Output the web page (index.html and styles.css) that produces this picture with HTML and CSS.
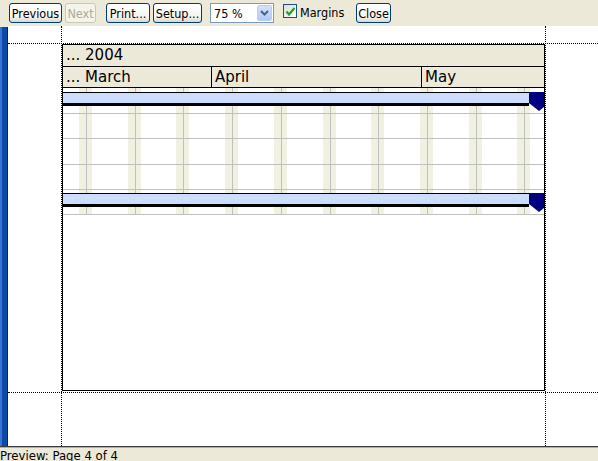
FILE: index.html
```html
<!DOCTYPE html>
<html>
<head>
<meta charset="utf-8">
<link rel="stylesheet" href="styles.css">
</head>
<body>
<div class="toolbar">
  <button class="btn w-prev">Previous</button>
  <button class="btn w-next" disabled>Next</button>
  <button class="btn w-print">Print...</button>
  <button class="btn w-setup">Setup...</button>
  <div class="combo">
    <span class="combo-text">75 %</span>
    <span class="combo-drop"><svg width="9" height="6" viewBox="0 0 9 6"><path d="M1 1 L4.5 4.5 L8 1" fill="none" stroke="#4D6185" stroke-width="2"/></svg></span>
  </div>
  <span class="check"><svg width="11" height="11" viewBox="0 0 11 11"><path d="M1.5 5.5 L4 8.5 L9.5 2" fill="none" stroke="#21A121" stroke-width="2.2"/></svg></span>
  <span class="check-label">Margins</span>
  <button class="btn w-close">Close</button>
</div>
<div class="main">
  <div class="strip"></div>
  <div class="canvas">
    <div class="chart">
      <div class="hdr-year">... 2004</div>
      <div class="hdr-months">
        <div class="month m-mar">... March</div>
        <div class="month m-apr">April</div>
        <div class="month m-may">May</div>
      </div>
      <div class="grid">
        <div class="row tall"><div class="bar first"><div class="bar-fill"></div><svg class="marker" width="20" height="19" viewBox="0 0 20 19"><polygon points="0,0 20,0 20,11 10,19 0,11" fill="#000080"/></svg></div></div>
        <div class="row"></div>
        <div class="row tall"></div>
        <div class="row"></div>
        <div class="row"><div class="bar"><div class="bar-fill"></div><svg class="marker" width="20" height="19" viewBox="0 0 20 19"><polygon points="0,0 20,0 20,11 10,19 0,11" fill="#000080"/></svg></div></div>
      </div>
    </div>
    <div class="dot-h dh-top"></div>
    <div class="dot-h dh-bot"></div>
    <div class="dot-v dv-left"></div>
    <div class="dot-v dv-right"></div>
  </div>
</div>
<div class="status">Preview: Page 4 of 4</div>
</body>
</html>
```

FILE: styles.css
```css
html, body {
  margin: 0;
  padding: 0;
}
body {
  width: 598px;
  height: 461px;
  overflow: hidden;
  background: #ECE9D8;
  font-family: "DejaVu Sans Condensed", "DejaVu Sans", "Liberation Sans", sans-serif;
}
.toolbar {
  height: 26px;
  box-sizing: border-box;
  padding: 3px 0 0 9px;
  display: flex;
  align-items: flex-start;
}
.btn {
  height: 20px;
  box-sizing: border-box;
  border: 1px solid #003C74;
  border-radius: 3px;
  background: linear-gradient(#FFFFFF, #F4F4F0 70%, #DCD8CC);
  font-family: "DejaVu Sans Condensed", "DejaVu Sans", sans-serif;
  font-size: 12.5px;
  color: #000;
  padding: 0;
  margin: 0;
  display: flex;
  align-items: center;
  justify-content: center;
}
.btn:disabled {
  border-color: #C9C7BA;
  background: #F5F4EA;
  color: #ACA899;
}
.w-prev { width: 53px; }
.w-next { width: 31px; margin-left: 3px; }
.w-print { width: 44px; margin-left: 10px; }
.w-setup { width: 49px; margin-left: 3px; }
.w-close { width: 35px; margin-left: 9px; }
.combo {
  margin-left: 8px;
  width: 64px;
  height: 20px;
  box-sizing: border-box;
  border: 1px solid #7F9DB9;
  background: #fff;
  display: flex;
  align-items: center;
  font-size: 12.5px;
}
.combo-text {
  flex: 1;
  padding-left: 3px;
}
.combo-drop {
  width: 15px;
  height: 16px;
  margin-right: 1px;
  box-sizing: border-box;
  border: 1px solid #BACCF6;
  border-radius: 2px;
  background: linear-gradient(#D6E2FC, #B4C8F5);
  display: flex;
  align-items: center;
  justify-content: center;
}
.check {
  margin-left: 9px;
  margin-top: 1px;
  width: 14px;
  height: 14px;
  box-sizing: border-box;
  border: 1px solid #1C5180;
  background: linear-gradient(135deg, #DCDCD7, #FFFFFF);
  display: flex;
  align-items: center;
  justify-content: center;
}
.check-label {
  margin-left: 3px;
  width: 47px;
  font-size: 12.5px;
  line-height: 20px;
  color: #000;
}
.main {
  display: flex;
  height: 420px;
}
.strip {
  width: 8px;
  box-sizing: border-box;
  border-left: 2px solid #3C74D4;
  border-right: 1px solid #0A2050;
  background: #0C4CA8;
  margin-top: 1px;
}
.canvas {
  flex: 1;
  background: #fff;
  position: relative;
  overflow: hidden;
  padding: 18px 0 0 54px;
  box-sizing: border-box;
}
.chart {
  width: 483px;
  height: 347px;
  box-sizing: border-box;
  border: 1px solid #000;
  overflow: hidden;
  font-family: "DejaVu Sans", "Liberation Sans", sans-serif;
  font-size: 15px;
  color: #000;
}
.hdr-year {
  height: 21px;
  line-height: 21px;
  background: #ECE9D8;
  border-bottom: 1px solid #000;
  padding-left: 3px;
}
.hdr-months {
  display: flex;
  height: 20px;
  background: #ECE9D8;
  border-bottom: 1px solid #000;
}
.month {
  line-height: 20px;
  padding-left: 3px;
  box-sizing: border-box;
}
.m-mar { width: 148px; }
.m-apr { width: 210px; border-left: 1px solid #000; }
.m-may { flex: 1; border-left: 1px solid #000; }
.grid {
  background-image: repeating-linear-gradient(90deg,
    transparent 0 16px,
    #F1F1E2 16px 23px,
    #C0C0C0 23px 24px,
    #F1F1E2 24px 29px,
    transparent 29px 48.7px);
}
.row {
  border-bottom: 1px solid #C0C0C0;
  padding-top: 3px;
  box-sizing: content-box;
  height: 21px;
}
.row.tall {
  height: 22px;
}
.bar {
  display: flex;
  align-items: flex-start;
  height: 14px;
}
.bar.first {
  margin-top: 1px;
}
.bar-fill {
  width: 466px;
  height: 10px;
  flex: none;
  border-top: 1px solid #000;
  border-bottom: 3px solid #000;
  background: #CCDDFF;
}
.marker {
  flex: none;
  display: block;
}
.dot-h {
  position: absolute;
  left: 0;
  right: 0;
  height: 0;
  border-top: 1px dotted #000;
}
.dh-top { top: 17px; }
.dh-bot { top: 366px; }
.dot-v {
  position: absolute;
  top: 0;
  bottom: 0;
  width: 0;
  border-left: 1px dotted #000;
}
.dv-left { left: 53px; }
.dv-right { left: 537px; }
.status {
  height: 15px;
  border-top: 1px solid #3C3C3C;
  box-shadow: inset 0 1px 0 #A8B0C0;
  font-family: "DejaVu Sans Condensed", "DejaVu Sans", sans-serif;
  font-size: 13px;
  line-height: 15px;
  padding-top: 1px;
  box-sizing: border-box;
  color: #000;
  white-space: nowrap;
}
```
